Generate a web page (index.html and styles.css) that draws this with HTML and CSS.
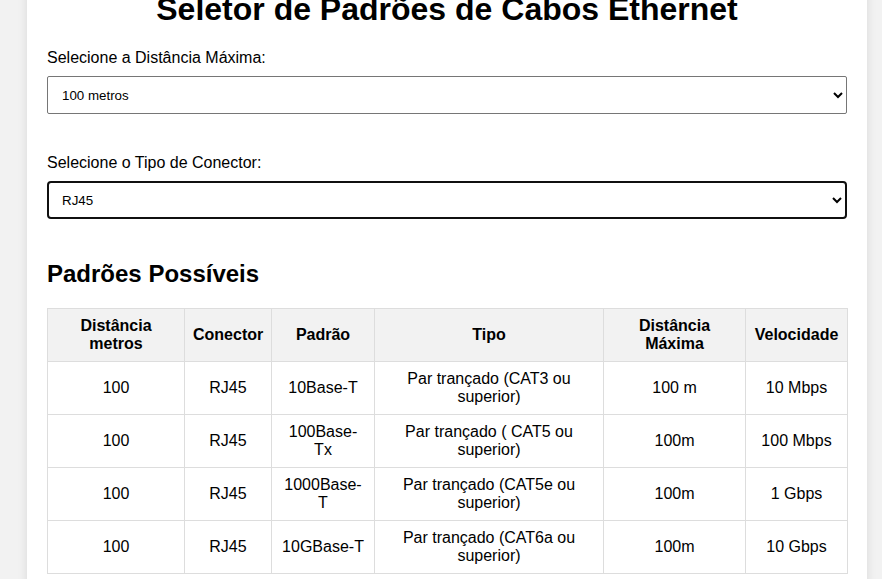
FILE: index.html
```html
<!DOCTYPE html>
<html lang="pt-BR">
<head>
<meta charset="utf-8">
<title>Seletor de Padrões de Cabos Ethernet</title>
<link rel="stylesheet" href="styles.css">
</head>
<body>
<div class="container">
  <h1 class="title">Seletor de Padrões de Cabos Ethernet</h1>
  <div class="field">
    <label class="field-label" for="distancia">Selecione a Distância Máxima:</label>
    <select class="field-select" id="distancia">
      <option>100 metros</option>
    </select>
  </div>
  <div class="field">
    <label class="field-label" for="conector">Selecione o Tipo de Conector:</label>
    <select class="field-select is-focused" id="conector">
      <option>RJ45</option>
    </select>
  </div>
  <h2 class="subtitle">Padrões Possíveis</h2>
  <table class="results">
    <colgroup>
      <col class="col-dist">
      <col class="col-conn">
      <col class="col-std">
      <col class="col-type">
      <col class="col-max">
      <col class="col-speed">
    </colgroup>
    <thead>
      <tr>
        <th>Distância metros</th>
        <th>Conector</th>
        <th>Padrão</th>
        <th>Tipo</th>
        <th>Distância Máxima</th>
        <th>Velocidade</th>
      </tr>
    </thead>
    <tbody>
      <tr>
        <td>100</td>
        <td>RJ45</td>
        <td>10Base-T</td>
        <td>Par trançado (CAT3 ou superior)</td>
        <td>100 m</td>
        <td>10 Mbps</td>
      </tr>
      <tr>
        <td>100</td>
        <td>RJ45</td>
        <td>100Base-Tx</td>
        <td>Par trançado ( CAT5 ou superior)</td>
        <td>100m</td>
        <td>100 Mbps</td>
      </tr>
      <tr>
        <td>100</td>
        <td>RJ45</td>
        <td>1000Base-T</td>
        <td>Par trançado (CAT5e ou superior)</td>
        <td>100m</td>
        <td>1 Gbps</td>
      </tr>
      <tr>
        <td>100</td>
        <td>RJ45</td>
        <td>10GBase-T</td>
        <td>Par trançado (CAT6a ou superior)</td>
        <td>100m</td>
        <td>10 Gbps</td>
      </tr>
    </tbody>
  </table>
</div>
</body>
</html>
```
FILE: styles.css
```css
html, body {
  margin: 0;
  padding: 0;
}

body {
  background: #f2f2f2;
  font-family: "Liberation Sans", Arial, sans-serif;
  color: #000;
}

.container {
  width: 800px;
  margin: -29px 0 0 27px;
  padding: 20px;
  background: #fff;
  box-shadow: 0 0 10px rgba(0, 0, 0, 0.1);
}

.title {
  font-size: 32px;
  font-weight: bold;
  text-align: center;
  line-height: 37px;
  margin: 0 0 21px;
}

.field {
  margin-bottom: 40px;
}

.field-label {
  display: block;
  font-size: 16px;
  line-height: 18px;
  margin-bottom: 9px;
}

.field-select {
  display: block;
  width: 100%;
  height: 38px;
  box-sizing: border-box;
  margin: 0;
  padding: 0 10px;
  font-family: "Liberation Sans", Arial, sans-serif;
  font-size: 13.333px;
  color: #000;
  background: #fff;
  border: 1px solid #767676;
  border-radius: 2px;
}

.field-select.is-focused {
  border: 2px solid #101010;
  border-radius: 4px;
  padding: 0 9px;
}

.subtitle {
  font-size: 24px;
  font-weight: bold;
  margin: 41px 0 20px;
  line-height: 28px;
}

.results {
  width: 800px;
  border-collapse: collapse;
  table-layout: fixed;
  font-size: 16px;
}

.col-dist { width: 137px; }
.col-conn { width: 87px; }
.col-std { width: 103px; }
.col-type { width: 229px; }
.col-max { width: 142px; }
.col-speed { width: 102px; }

.results th,
.results td {
  border: 1px solid #ddd;
  padding: 8px;
  text-align: center;
  vertical-align: middle;
  line-height: 18px;
}

.results th {
  background: #f2f2f2;
  font-weight: bold;
}
```
